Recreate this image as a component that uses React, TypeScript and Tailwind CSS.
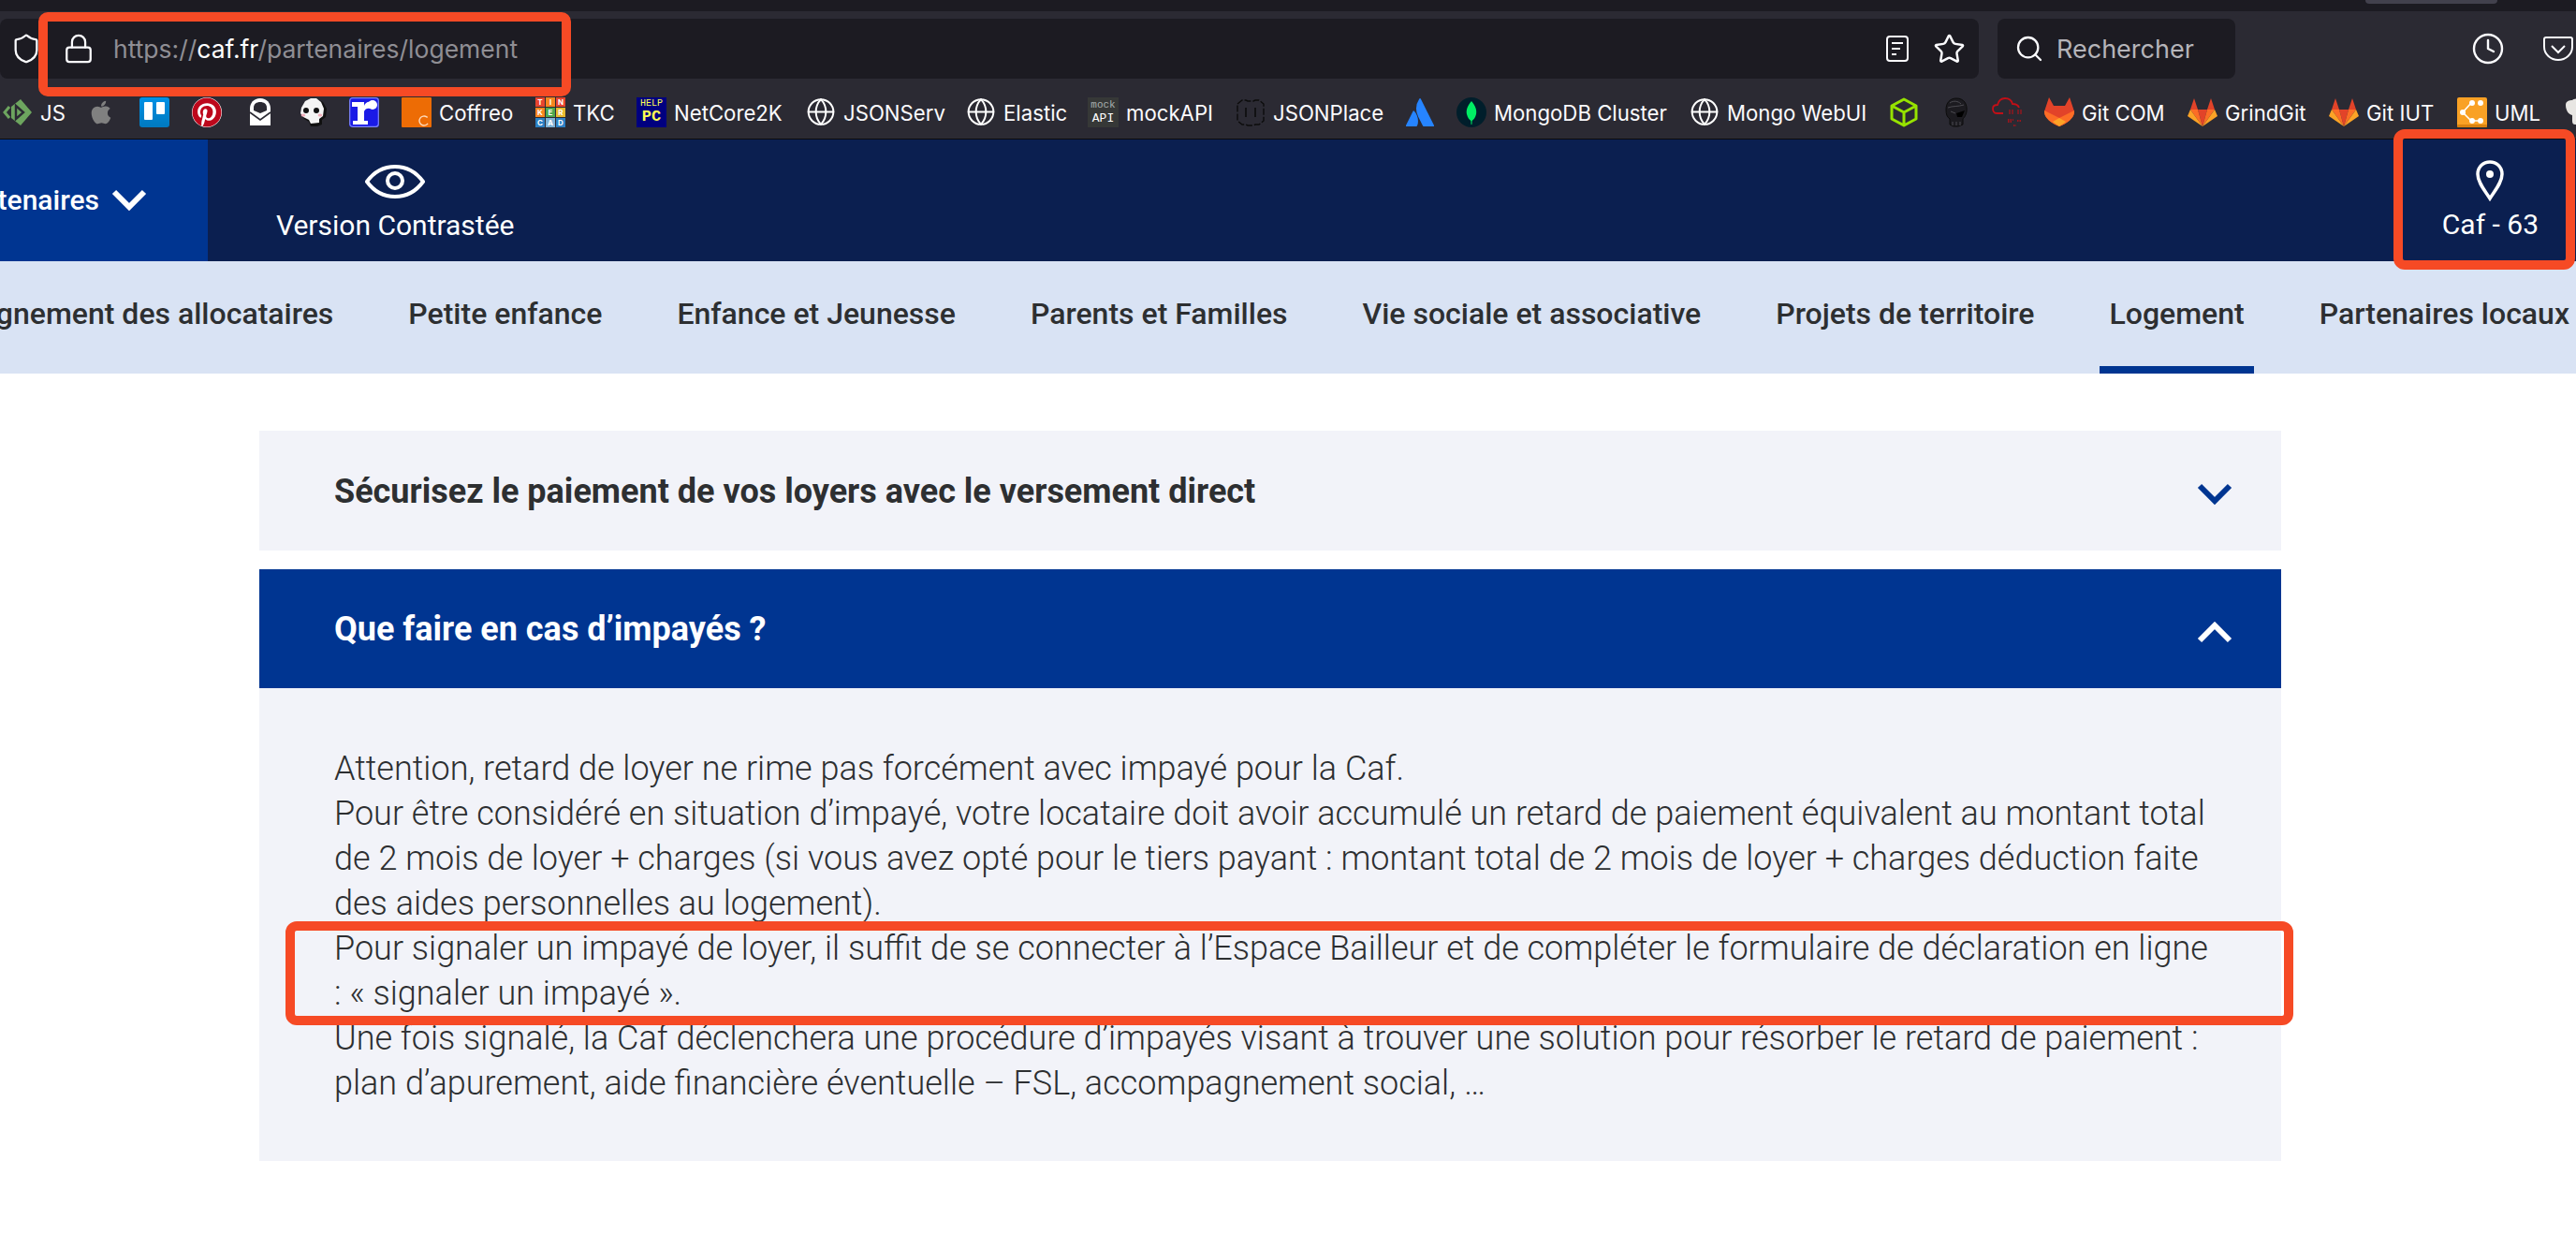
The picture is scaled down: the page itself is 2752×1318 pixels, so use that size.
import React from "react";
import { Globe, Clock, Search, Star, Lock, Shield } from "lucide-react";
import { FaApple, FaPinterest } from "react-icons/fa";
import { SiAtlassian } from "react-icons/si";

const S = ({ children }: { children: React.ReactNode }) => (
  <svg width="32" height="32" viewBox="0 0 32 32" className="shrink-0">{children}</svg>
);

const JsIcon = () => (
  <S>
    <path d="M7 10 L2 16 L7 22" fill="none" stroke="#6da55f" strokeWidth="3" />
    <path d="M19 2 L31 16 L19 30 L9 22 V10Z" fill="#6da55f" />
    <path d="M14 9 L22 16 L14 23 V9Z" fill="none" stroke="#2b2a33" strokeWidth="2.4" />
  </S>
);
const AppleIcon = () => (
  <div className="w-[32px] h-[32px] flex items-center justify-center text-[#808080] text-[28px]"><FaApple /></div>
);
const TrelloIcon = () => (
  <S>
    <defs>
      <linearGradient id="tr" x1="0" y1="0" x2="0" y2="1">
        <stop offset="0" stopColor="#0091e6" />
        <stop offset="1" stopColor="#0079bf" />
      </linearGradient>
    </defs>
    <rect width="32" height="32" rx="3" fill="url(#tr)" />
    <rect x="5" y="5" width="9" height="19" rx="1" fill="#fff" />
    <rect x="18" y="5" width="9" height="13" rx="1" fill="#fff" />
  </S>
);
const PinterestIcon = () => (
  <div className="relative w-[32px] h-[32px] rounded-full bg-white text-[#bd081c] text-[32px]"><FaPinterest /></div>
);
const ProtonIcon = () => (
  <S>
    <path d="M5 12 C5 6 9 1 16 1 C23 1 27 6 27 12 V30 H5Z" fill="#fff" />
    <path d="M9 14 V11 C9 7 12 5 16 5 C20 5 23 7 23 11 V14 L16 17Z" fill="#2b2a33" />
    <path d="M5 16 L16 24 L27 16" fill="none" stroke="#2b2a33" strokeWidth="1.6" />
  </S>
);
const SkullIcon = () => (
  <S>
    <path d="M4 12 L7 5 L13 2 H20 L26 5 L30 12 L29 21 L25 24 V29 L20 31 H13 L11 26 L6 23 L3 19Z" fill="#111" />
    <path d="M3 11 L7 4 L13 1 H19 L24 5 L27 12 L26 20 L22 23 V27 L13 28 L11 24 L5 21 L2 17Z" fill="#f4f4f4" />
    <circle cx="8" cy="14" r="3" fill="#111" />
    <circle cx="19" cy="14" r="3" fill="#111" />
    <ellipse cx="5" cy="19" rx="2.4" ry="1.6" fill="#f3b0bd" />
    <ellipse cx="23" cy="19" rx="2.4" ry="1.6" fill="#f3b0bd" />
  </S>
);
const RIcon = () => (
  <S>
    <rect width="32" height="32" rx="3" fill="#1a1ae6" />
    <rect x="0.7" y="0.7" width="30.6" height="30.6" rx="3" fill="none" stroke="#7f86f0" strokeWidth="1.2" />
    <path d="M3 5 H16 V9 C17 6 20 4 23 5 V12 C20 11 17 12 16 15 V25 H20 V29 H4 V25 H9 V10 H3Z" fill="#fff" />
    <circle cx="25" cy="8" r="5" fill="#fff" />
  </S>
);
const CoffreoIcon = () => (
  <S>
    <rect width="32" height="32" rx="1" fill="#ed6c05" />
    <circle cx="24" cy="25" r="5" fill="none" stroke="#ffd9b8" strokeWidth="1.4" strokeDasharray="24 8" transform="rotate(35 24 25)" />
  </S>
);
const TinkerIcon = () => {
  const colors = ["#e8442e", "#f6861f", "#e8442e", "#f6861f", "#4ca84e", "#e6b92e", "#2c80c4", "#7fb2d6", "#2c80c4"];
  const letters = "TINKERCAD";
  const cells = [0, 1, 2, 3, 4, 5, 6, 7, 8];
  return (
    <div className="grid grid-cols-3 grid-rows-3 w-[32px] h-[32px] gap-px shrink-0">
      {cells.map((i) => (
        <div key={i} className="flex items-center justify-center text-white text-[8px] font-bold leading-none" style={{ background: colors[i] }}>
          {letters[i]}
        </div>
      ))}
    </div>
  );
};
const NetCoreIcon = () => (
  <div className="w-[32px] h-[32px] bg-[#00007f] flex flex-col items-center justify-center shrink-0 leading-none font-[Liberation_Mono,monospace]">
    <span className="text-[10px] text-[#ffff54]">HELP</span>
    <span className="text-[17px] font-bold text-[#ffff54]">PC</span>
  </div>
);
const GlobeIcon = () => (
  <div className="w-[32px] h-[32px] flex items-center justify-center text-white shrink-0"><Globe size={33} strokeWidth={1.5} /></div>
);
const MockIcon = () => (
  <div className="w-[33px] h-[32px] bg-[#363837] flex flex-col items-center justify-center shrink-0 leading-none font-[Liberation_Mono,monospace]">
    <span className="text-[11px] text-[#a8b0b0]">mock</span>
    <span className="text-[13px] text-white mt-[2px]">API</span>
  </div>
);
const JsonIcon = () => (
  <S>
    <path d="M2 7 L7 3 H11 L13 4 H19 L21 3 H25 L30 7 V25 L25 29 H21 L19 30 H13 L11 29 H7 L2 25Z" fill="none" stroke="#0c0c0c" strokeWidth="1.4" strokeDasharray="7 2" />
    <path d="M11 11 V21 M21 11 V21" stroke="#0c0c0c" strokeWidth="1.6" />
  </S>
);
const MongoIcon = () => (
  <S>
    <circle cx="16" cy="16" r="16" fill="#001e2b" />
    <path d="M16 4 C20 9 22 13 21 18 C20 22 18 24 16.6 25 L16.4 29 H15.6 L15.4 25 C14 24 12 22 11 18 C10 13 12 9 16 4Z" fill="#00ed64" />
  </S>
);
const CubeIcon = () => (
  <S>
    <path d="M16 2 L29 9 V23 L16 30 L3 23 V9Z M3 9 L16 16 L29 9 M16 16 V30" fill="none" stroke="#97e300" strokeWidth="3" strokeLinejoin="round" />
  </S>
);
const DarkSkullIcon = () => (
  <S>
    <path d="M16 1 C24 1 28 7 27 15 C26 20 24 22 23 23 V29 L18 31 H13 L9 29 V23 C6 21 5 18 5 13 C5 6 9 1 16 1Z" fill="#1c1b20" stroke="#0c0c0c" strokeWidth="1" />
    <path d="M9 6 C13 3 18 4 21 7 M7 11 C12 9 18 10 24 8 M10 15 L15 17" fill="none" stroke="#4b4a50" strokeWidth="1" />
    <path d="M16 17 L25 14 L22 21 H17Z" fill="#000" />
    <path d="M12 26 V30 M16 26 V30 M20 26 V30" stroke="#4b4a50" strokeWidth="1" />
  </S>
);
const CloudIcon = () => (
  <S>
    <path d="M12 17 H5 C2 17 1 14 1 12 C1 9 3 8 6 8 C7 4 10 1 14 1 C18 1 21 3 22 7 C25 7 28 8 29 11" fill="none" stroke="#c20f17" strokeWidth="1.8" />
    <path d="M19 13 V18 M22 13 V18 M28 13 V18 M31 13 V18" stroke="#c20f17" strokeWidth="1" />
    <path d="M17 24 H23 M17 26 H21 M27 25 H32 M23 30 H26" stroke="#c20f17" strokeWidth="1.4" strokeDasharray="1.5 1" />
  </S>
);
const FoxIcon = () => (
  <S>
    <path d="M5 0 L10 9 H22 L27 0 L32 15 C32 22 24 28 16 31 C8 28 0 22 0 15Z" fill="#e24329" />
    <path d="M0 14 L16 22 L32 14 V16 C32 22 24 28 16 31 C8 28 0 22 0 16Z" fill="#fc6d26" />
    <path d="M9 26 L16 22 L23 26 L16 31Z" fill="#fca326" />
  </S>
);
const GitlabIcon = () => (
  <S>
    <polygon points="11,13 21,13 16,31" fill="#e24329" />
    <polygon points="11,13 16,31 3,13" fill="#fc6d26" />
    <polygon points="21,13 16,31 29,13" fill="#fc6d26" />
    <polygon points="3,13 0,20 16,31" fill="#fca326" />
    <polygon points="29,13 32,20 16,31" fill="#fca326" />
    <polygon points="3,13 7,1 11,13" fill="#e24329" />
    <polygon points="21,13 25,1 29,13" fill="#e24329" />
  </S>
);
const UmlIcon = () => (
  <S>
    <rect width="32" height="32" rx="2" fill="#f9a125" />
    <rect y="29" width="32" height="3" rx="1" fill="#d9820f" />
    <path d="M15 6 L6 16 L15 25 M15 25 H24" fill="none" stroke="#fff" strokeWidth="1.6" />
    <circle cx="16" cy="6" r="3" fill="#fff" />
    <circle cx="25" cy="6" r="3" fill="#fff" />
    <circle cx="6" cy="16" r="3" fill="#fff" />
    <circle cx="16" cy="25" r="3" fill="#fff" />
    <circle cx="25" cy="25" r="3" fill="#fff" />
  </S>
);
const ChefIcon = () => (
  <svg width="32" height="32" viewBox="0 0 32 32" className="shrink-0">
    <path d="M2 8 C2 4 6 3 9 3 C11 1 20 1 24 2 C28 3 30 5 30 9 V26 C30 29 27 29 26 29 H12 C9 29 9 26 9 24 V19 C5 18 2 14 2 8Z" fill="#e8e6e3" />
  </svg>
);

const bookmarks: { w: string; icon: React.ReactNode; text?: string }[] = [
  { w: "w-[95px]", icon: <JsIcon />, text: "JS" },
  { w: "w-[51px] -ml-[6px]", icon: <AppleIcon /> },
  { w: "w-[56px] ml-[6px]", icon: <TrelloIcon /> },
  { w: "w-[57px]", icon: <PinterestIcon /> },
  { w: "w-[57px]", icon: <ProtonIcon /> },
  { w: "w-[54px]", icon: <SkullIcon /> },
  { w: "w-[56px]", icon: <RIcon /> },
  { w: "w-[143px]", icon: <CoffreoIcon />, text: "Coffreo" },
  { w: "w-[108px]", icon: <TinkerIcon />, text: "TKC" },
  { w: "w-[181px]", icon: <NetCoreIcon />, text: "NetCore2K" },
  { w: "w-[171px]", icon: <GlobeIcon />, text: "JSONServ" },
  { w: "w-[130px]", icon: <GlobeIcon />, text: "Elastic" },
  { w: "w-[158px]", icon: <MockIcon />, text: "mockAPI" },
  { w: "w-[182px]", icon: <JsonIcon />, text: "JSONPlace" },
  { w: "w-[54px]", icon: <div className="w-[30px] h-[32px] flex items-center justify-center text-[#2684ff] text-[30px]"><SiAtlassian /></div> },
  { w: "w-[249px]", icon: <MongoIcon />, text: "MongoDB Cluster" },
  { w: "w-[213px]", icon: <GlobeIcon />, text: "Mongo WebUI" },
  { w: "w-[56px]", icon: <CubeIcon /> },
  { w: "w-[54px]", icon: <DarkSkullIcon /> },
  { w: "w-[56px]", icon: <CloudIcon /> },
  { w: "w-[153px]", icon: <FoxIcon />, text: "Git COM" },
  { w: "w-[151px]", icon: <GitlabIcon />, text: "GrindGit" },
  { w: "w-[137px]", icon: <GitlabIcon />, text: "Git IUT" },
  { w: "w-[114px]", icon: <UmlIcon />, text: "UML" },
];

const tabs = [
  "Accompagnement des allocataires",
  "Petite enfance",
  "Enfance et Jeunesse",
  "Parents et Familles",
  "Vie sociale et associative",
  "Projets de territoire",
  "Logement",
  "Partenaires locaux",
];

const lines = [
  "Attention, retard de loyer ne rime pas forcément avec impayé pour la Caf.",
  "Pour être considéré en situation d’impayé, votre locataire doit avoir accumulé un retard de paiement équivalent au montant total",
  "de 2 mois de loyer + charges (si vous avez opté pour le tiers payant : montant total de 2 mois de loyer + charges déduction faite",
  "des aides personnelles au logement).",
  "Pour signaler un impayé de loyer, il suffit de se connecter à l’Espace Bailleur et de compléter le formulaire de déclaration en ligne",
  ": « signaler un impayé ».",
  "Une fois signalé, la Caf déclenchera une procédure d’impayés visant à trouver une solution pour résorber le retard de paiement :",
  "plan d’apurement, aide financière éventuelle – FSL, accompagnement social, …",
];

const Chevron = ({ up, color }: { up?: boolean; color: string }) => (
  <svg width="38" height="24" viewBox="0 0 38 24" className={`shrink-0 ${up ? "mt-[6px]" : "mt-[8px]"}`}>
    <path d={up ? "M3 21 L19 5 L35 21" : "M3 3 L19 19 L35 3"} fill="none" stroke={color} strokeWidth="6" />
  </svg>
);

export default function App() {
  return (
    <div className="relative w-[2752px] h-[1318px] overflow-hidden bg-white font-[Roboto,sans-serif]">
      {/* Browser chrome */}
      <div className="h-[12px] bg-[#1c1b22] relative">
        <div className="absolute left-[2527px] top-0 w-[141px] h-[4px] rounded-b-[6px] bg-[#42414d]" />
      </div>
      <div className="h-[136px] bg-[#2b2a33] pt-[8px] font-[Inter,sans-serif]">
        <div className="flex h-[64px] items-center">
          <div className="w-[2114px] h-full bg-[#1c1b22] rounded-[8px] flex items-center text-[#fbfbfe]">
            <Shield size={34} strokeWidth={1.6} className="ml-[11px] shrink-0" />
            <Lock size={34} strokeWidth={1.6} className="ml-[22px] shrink-0" />
            <span className="ml-[20px] pt-[2px] text-[26.5px] text-[#8f8e94] whitespace-nowrap">
              https://<span className="text-white">caf.fr</span>/partenaires/logement
            </span>
            <svg width="24" height="28" viewBox="0 0 24 28" className="ml-auto shrink-0">
              <rect x="1" y="1" width="22" height="26" rx="3" fill="none" stroke="#fbfbfe" strokeWidth="2" />
              <path d="M6 8 H18 M6 14 H15 M6 20 H11" stroke="#fbfbfe" strokeWidth="2" />
            </svg>
            <Star size={35} strokeWidth={1.7} className="ml-[26px] mr-[14px] shrink-0" />
          </div>
          <div className="ml-[20px] w-[254px] h-full bg-[#1c1b22] rounded-[8px] flex items-center">
            <Search size={32} strokeWidth={1.7} className="ml-[18px] text-[#fbfbfe] shrink-0" />
            <span className="ml-[13px] pt-[2px] text-[27px] text-[#b5b4b9]">Rechercher</span>
          </div>
          <Clock size={36} strokeWidth={1.6} className="ml-[252px] text-[#fbfbfe] shrink-0" />
          <svg width="32" height="26" viewBox="0 0 32 26" className="ml-[41px] shrink-0">
            <path d="M1 3 C1 2 2 1 3 1 H29 C30 1 31 2 31 3 V11 C31 19 24 25 16 25 C8 25 1 19 1 11Z M9 10 L16 17 L23 10" fill="none" stroke="#fbfbfe" strokeWidth="2" />
          </svg>
        </div>
        <div className="flex h-[64px] items-center pl-[3px] pt-[8px] overflow-hidden">
          {bookmarks.map((b, i) => (
            <div key={i} className={`flex items-center shrink-0 ${b.w}`}>
              {b.icon}
              {b.text && <span className="ml-[8px] pt-[1px] text-[22.2px] text-[#fbfbfe] whitespace-nowrap">{b.text}</span>}
            </div>
          ))}
          <ChefIcon />
        </div>
      </div>
      <div className="h-px bg-[#0c0c0d]" />

      {/* Site nav */}
      <div className="h-[130px] bg-[#0b1f50] flex text-white">
        <div className="w-[222px] bg-[#003591] overflow-hidden flex justify-end items-center pr-[65px] pb-[2px] shrink-0">
          <span className="text-[30px] font-medium whitespace-nowrap">Partenaires</span>
          <svg width="38" height="24" viewBox="0 0 38 24" className="ml-[13px] shrink-0">
            <path d="M3 4 L19 20 L35 4" fill="none" stroke="#fff" strokeWidth="6" />
          </svg>
        </div>
        <div className="ml-[73px] flex flex-col items-center pt-[27px]">
          <svg width="64" height="36" viewBox="0 0 64 36">
            <path d="M2 18 C10 7 20 2 32 2 C44 2 54 7 62 18 C54 29 44 34 32 34 C20 34 10 29 2 18Z" fill="none" stroke="#fff" strokeWidth="4" />
            <circle cx="32" cy="17" r="8" fill="none" stroke="#fff" strokeWidth="4" />
          </svg>
          <span className="mt-[12px] text-[30px] whitespace-nowrap leading-[34px]">Version Contrastée</span>
        </div>
        <div className="ml-auto mr-[40px] flex flex-col items-center pt-[22px]">
          <svg width="30" height="44" viewBox="0 0 30 44">
            <path d="M15 2 C8 2 2 7 2 15 C2 24 10 33 15 41 C20 33 28 24 28 15 C28 7 22 2 15 2Z" fill="none" stroke="#fff" strokeWidth="3.5" />
            <circle cx="15" cy="15" r="4" fill="#fff" />
          </svg>
          <span className="mt-[8px] text-[30px] whitespace-nowrap leading-[34px]">Caf - 63</span>
        </div>
      </div>

      {/* Tabs */}
      <div className="h-[120px] bg-[#d9e3f4] overflow-hidden">
        <div className="h-full -mr-[3px] flex justify-end items-stretch gap-[60px] text-[#2d2f31] font-medium text-[32px]">
          {tabs.map((t) => (
            <div key={t} className={`shrink-0 whitespace-nowrap flex items-center px-[10px] border-b-[8px] ${t === "Logement" ? "border-[#003591]" : "border-transparent"}`}>
              {t}
            </div>
          ))}
        </div>
      </div>

      {/* Accordion */}
      <div className="ml-[277px] w-[2160px] mt-[61px] flex flex-col gap-[20px] text-[#2d2f31]">
        <div className="h-[128px] bg-[#f2f3f9] flex items-center justify-between pl-[80px] pr-[52px]">
          <span className="text-[36px] font-bold pt-[2px]">Sécurisez le paiement de vos loyers avec le versement direct</span>
          <Chevron color="#003591" />
        </div>
        <div>
          <div className="h-[127px] bg-[#003591] flex items-center justify-between pl-[80px] pr-[52px] text-white">
            <span className="text-[36px] font-bold">Que faire en cas d’impayés ?</span>
            <Chevron up color="#ffffff" />
          </div>
          <div className="bg-[#f2f3f9] pl-[80px] pt-[62px] pb-[59px] text-[36px] font-light leading-[48px] whitespace-nowrap">
            {lines.map((l) => (
              <div key={l}>{l}</div>
            ))}
          </div>
        </div>
      </div>

      {/* Annotations */}
      <div className="absolute left-[41px] top-[13px] w-[569px] h-[90px] border-[10px] border-[#f64a25] rounded-[10px]" />
      <div className="absolute left-[2557px] top-[138px] w-[194px] h-[150px] border-[10px] border-[#f64a25] rounded-[12px]" />
      <div className="absolute left-[305px] top-[984px] w-[2145px] h-[111px] border-[10px] border-[#f64a25] rounded-[12px]" />
    </div>
  );
}
